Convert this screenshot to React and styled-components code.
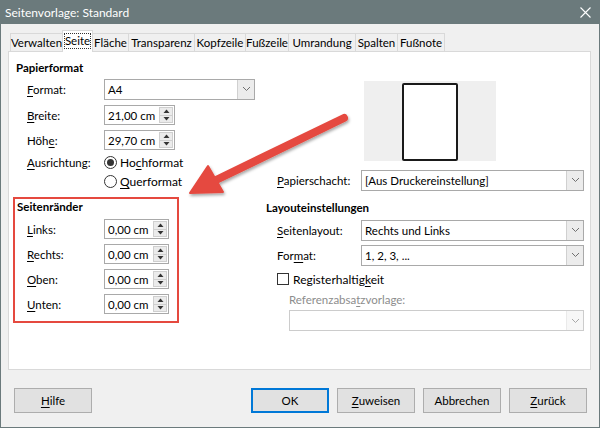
import React from "react";
import styled, { createGlobalStyle } from "styled-components";

const GlobalStyle = createGlobalStyle`
  html, body { margin: 0; padding: 0; background: #ffffff; }
  body {
    font-family: Lato, "Noto Sans", "Liberation Sans", sans-serif;
    font-size: 11.5px;
    color: #000;
  }
`;

const TABS = [
  { label: "Verwalten", w: 53 },
  { label: "Seite", w: 31, active: true },
  { label: "Fläche", w: 37 },
  { label: "Transparenz", w: 67 },
  { label: "Kopfzeile", w: 52 },
  { label: "Fußzeile", w: 44 },
  { label: "Umrandung", w: 68 },
  { label: "Spalten", w: 43 },
  { label: "Fußnote", w: 48 },
];

const MARGINS = [
  { key: "L", post: "inks:" },
  { key: "R", post: "echts:" },
  { key: "O", post: "ben:" },
  { key: "U", post: "nten:" },
];

const Chevron = () => (
  <svg width="9" height="6" viewBox="0 0 9 6">
    <path d="M1 1 L4.5 4.5 L8 1" fill="none" stroke="#707070" strokeWidth="1" />
  </svg>
);

const Dropdown = ({ value, width, disabled }) => (
  <Select $width={width} $disabled={disabled}>
    <SelectValue>{value}</SelectValue>
    <SelectButton $disabled={disabled}>
      <Chevron />
    </SelectButton>
  </Select>
);

const SpinField = ({ value, width }) => (
  <Spin $width={width}>
    <SpinValue>{value}</SpinValue>
    <SpinButtons>
      <SpinHalf>
        <svg width="7" height="4" viewBox="0 0 7 4">
          <path d="M0.5 4 L3.5 0.5 L6.5 4 Z" fill="#333" />
        </svg>
      </SpinHalf>
      <SpinHalf $bottom>
        <svg width="7" height="4" viewBox="0 0 7 4">
          <path d="M0.5 0 L3.5 3.5 L6.5 0 Z" fill="#333" />
        </svg>
      </SpinHalf>
    </SpinButtons>
  </Spin>
);

const App = () => {
  return (
    <>
      <GlobalStyle />
      <Window>
        <TitleBar>
          <TitleText>Seitenvorlage: Standard</TitleText>
          <CloseIcon viewBox="0 0 11 11" width="11" height="11">
            <path d="M0.5 0.5 L10.5 10.5 M10.5 0.5 L0.5 10.5" stroke="#fff" strokeWidth="1.1" />
          </CloseIcon>
        </TitleBar>

        <Body>
          <TabBar>
            {TABS.map((t) => (
              <Tab key={t.label} $w={t.w} $active={t.active}>
                {t.active ? <Focus>{t.label}</Focus> : t.label}
              </Tab>
            ))}
          </TabBar>

          <Panel>
            <LeftColumn>
              <Heading>Papierformat</Heading>
              <Row $mt={3}>
                <Label><U>F</U>ormat:</Label>
                <Dropdown value="A4" width={151} />
              </Row>
              <Row $mt={6}>
                <Label><U>B</U>reite:</Label>
                <SpinField value="21,00 cm" width={71} />
              </Row>
              <Row $mt={5}>
                <Label>Höh<U>e</U>:</Label>
                <SpinField value="29,70 cm" width={71} />
              </Row>
              <Row $mt={3} $h={18}>
                <Label><U>A</U>usrichtung:</Label>
                <Radio $checked />
                <RadioText>Ho<U>c</U>hformat</RadioText>
              </Row>
              <Row $mt={1} $h={18}>
                <Label />
                <Radio />
                <RadioText><U>Q</U>uerformat</RadioText>
              </Row>

              <Highlight>
                <Heading>Seitenränder</Heading>
                {MARGINS.map((m, i) => (
                  <Row key={m.key} $mt={i === 0 ? 4 : 5} $indent={10}>
                    <Label $w={77}>
                      <U>{m.key}</U>
                      {m.post}
                    </Label>
                    <SpinField value="0,00 cm" width={65} />
                  </Row>
                ))}
              </Highlight>
            </LeftColumn>

            <RightColumn>
              <Preview>
                <PreviewPage />
              </Preview>
              <Row $mt={9}>
                <Label $w={84}><U>P</U>apierschacht:</Label>
                <Dropdown value="[Aus Druckereinstellung]" width={223} />
              </Row>
              <Heading $mt={10}>Layouteinstellungen</Heading>
              <Row $mt={4}>
                <Label $w={84}><U>S</U>eitenlayout:</Label>
                <Dropdown value="Rechts und Links" width={223} />
              </Row>
              <Row $mt={5}>
                <Label $w={84}>For<U>m</U>at:</Label>
                <Dropdown value="1, 2, 3, ..." width={223} />
              </Row>
              <Row $mt={6} $h={16}>
                <Checkbox />
                <CheckText>Registerhaltig<U>k</U>eit</CheckText>
              </Row>
              <SubLabel>Referenzabsa<U>t</U>zvorlage:</SubLabel>
              <SubField>
                <Dropdown value="" width={295} disabled />
              </SubField>
            </RightColumn>
          </Panel>

          <Footer>
            <Button><U>H</U>ilfe</Button>
            <ButtonGroup>
              <Button $primary>OK</Button>
              <Button><U>Z</U>uweisen</Button>
              <Button>Abbrechen</Button>
              <Button><U>Z</U>urück</Button>
            </ButtonGroup>
          </Footer>
        </Body>

        <Annotation width="600" height="428" viewBox="0 0 600 428">
          <defs>
            <filter id="shadow" x="-20%" y="-20%" width="140%" height="160%">
              <feDropShadow dx="1" dy="2" stdDeviation="1.6" floodColor="#000" floodOpacity="0.35" />
            </filter>
          </defs>
          <g filter="url(#shadow)">
            <path d="M344 118 L214 181" stroke="#e5493f" strokeWidth="8" strokeLinecap="round" />
            <path d="M190 193 L208 166 L223 192 Z" fill="#e5493f" stroke="#e5493f" strokeWidth="2" strokeLinejoin="round" />
          </g>
        </Annotation>
      </Window>
    </>
  );
};

export default App;

const Window = styled.div`
  position: relative;
  width: 600px;
  height: 428px;
  box-sizing: border-box;
  background: #f0f0f0;
  border: 1px solid #6b7a7c;
  border-top: none;
  display: flex;
  flex-direction: column;
`;

const TitleBar = styled.div`
  height: 24px;
  margin: 0 -1px;
  background: #6b7a7c;
  display: flex;
  align-items: center;
  justify-content: space-between;
  padding: 0 9px 0 5px;
`;

const TitleText = styled.span`
  color: #ffffff;
  font-size: 12px;
`;

const CloseIcon = styled.svg`
  display: block;
`;

const Body = styled.div`
  flex: 1;
  display: flex;
  flex-direction: column;
  padding: 7px 8px 0 7px;
`;

const TabBar = styled.div`
  display: flex;
  align-items: flex-end;
  height: 21px;
  padding-left: 2px;
  position: relative;
  z-index: 1;
  margin-bottom: -1px;
`;

const Tab = styled.div`
  box-sizing: border-box;
  width: ${(p) => p.$w}px;
  height: ${(p) => (p.$active ? 22 : 19)}px;
  margin-right: -1px;
  border: 1px solid #d9d9d9;
  border-bottom: ${(p) => (p.$active ? "none" : "1px solid #d9d9d9")};
  background: ${(p) => (p.$active ? "#ffffff" : "#f0f0f0")};
  display: flex;
  align-items: center;
  justify-content: center;
  padding-bottom: ${(p) => (p.$active ? 2 : 0)}px;
  white-space: nowrap;
  position: relative;
  z-index: ${(p) => (p.$active ? 2 : 1)};
`;

const Focus = styled.span`
  outline: 1px dotted #333;
  line-height: 14px;
`;

const Panel = styled.div`
  box-sizing: border-box;
  height: 319px;
  background: #ffffff;
  border: 1px solid #d9d9d9;
  display: grid;
  grid-template-columns: 250px 1fr;
  padding: 8px 5px 0 7px;
`;

const LeftColumn = styled.div`
  display: flex;
  flex-direction: column;
`;

const RightColumn = styled.div`
  display: flex;
  flex-direction: column;
`;

const Heading = styled.div`
  font-weight: bold;
  font-size: 11.5px;
  line-height: 16px;
  height: 16px;
  margin-top: ${(p) => p.$mt || 0}px;
`;

const Row = styled.div`
  display: flex;
  align-items: center;
  height: ${(p) => p.$h || 20}px;
  margin-top: ${(p) => p.$mt || 0}px;
  padding-left: ${(p) => (p.$indent !== undefined ? p.$indent : 11)}px;
`;

const Label = styled.div`
  width: ${(p) => p.$w || 77}px;
  flex-shrink: 0;
  white-space: nowrap;
`;

const U = styled.span`
  text-decoration: underline;
  text-underline-offset: 2px;
`;

const Select = styled.div`
  box-sizing: border-box;
  width: ${(p) => p.$width}px;
  height: 21px;
  border: 1px solid ${(p) => (p.$disabled ? "#cccccc" : "#a9a9a9")};
  background: #ffffff;
  display: flex;
  align-items: stretch;
`;

const SelectValue = styled.div`
  flex: 1;
  display: flex;
  align-items: center;
  padding-left: 3px;
  white-space: nowrap;
`;

const SelectButton = styled.div`
  width: 16px;
  border-left: 1px solid ${(p) => (p.$disabled ? "#dddddd" : "#d0d0d0")};
  background: ${(p) => (p.$disabled ? "#f2f2f2" : "#ececec")};
  display: flex;
  align-items: center;
  justify-content: center;
  opacity: ${(p) => (p.$disabled ? 0.6 : 1)};
`;

const Spin = styled.div`
  box-sizing: border-box;
  width: ${(p) => p.$width}px;
  height: 20px;
  border: 1px solid #a9a9a9;
  background: #ffffff;
  display: flex;
  align-items: stretch;
`;

const SpinValue = styled.div`
  flex: 1;
  display: flex;
  align-items: center;
  padding-left: 3px;
  white-space: nowrap;
`;

const SpinButtons = styled.div`
  width: 14px;
  margin: 1px;
  display: flex;
  flex-direction: column;
  background: #ebebeb;
  border: 1px solid #cfcfcf;
  box-sizing: border-box;
`;

const SpinHalf = styled.div`
  flex: 1;
  display: flex;
  align-items: center;
  justify-content: center;
  border-top: ${(p) => (p.$bottom ? "1px solid #cfcfcf" : "none")};
`;

const Radio = styled.span`
  box-sizing: border-box;
  width: 13px;
  height: 13px;
  border-radius: 50%;
  border: 1px solid #333;
  background: #fff;
  display: flex;
  align-items: center;
  justify-content: center;
  &::after {
    content: "";
    width: 7px;
    height: 7px;
    border-radius: 50%;
    background: ${(p) => (p.$checked ? "#333" : "transparent")};
  }
`;

const RadioText = styled.span`
  margin-left: 3px;
  font-size: 12px;
`;

const Highlight = styled.div`
  box-sizing: border-box;
  width: 166px;
  height: 126px;
  margin: 7px 0 0 -3px;
  border: 2px solid #e5493f;
  padding: 0 0 0 2px;
  display: flex;
  flex-direction: column;
`;

const Preview = styled.div`
  width: 132px;
  height: 80px;
  margin: 21px 0 0 98px;
  background: #efefef;
  display: flex;
  justify-content: center;
  align-items: flex-end;
`;

const PreviewPage = styled.div`
  box-sizing: border-box;
  width: 56px;
  height: 78px;
  border: 2px solid #1a1a1a;
  border-radius: 2px;
  background: #fff;
`;

const Checkbox = styled.span`
  box-sizing: border-box;
  width: 12px;
  height: 12px;
  border: 1px solid #333;
  background: #fff;
`;

const CheckText = styled.span`
  margin-left: 4px;
  font-size: 12px;
`;

const SubLabel = styled.div`
  color: #8d8d8d;
  line-height: 16px;
  margin: 5px 0 0 23px;
`;

const SubField = styled.div`
  margin: 2px 0 0 23px;
`;

const Footer = styled.div`
  display: flex;
  justify-content: space-between;
  align-items: center;
  padding: 18px 4px 0 6px;
`;

const ButtonGroup = styled.div`
  display: flex;
  gap: 8px;
`;

const Button = styled.div`
  box-sizing: border-box;
  width: 78px;
  height: 25px;
  background: #e1e1e1;
  border: ${(p) => (p.$primary ? "2px solid #0078d7" : "1px solid #adadad")};
  display: flex;
  align-items: center;
  justify-content: center;
`;

const Annotation = styled.svg`
  position: absolute;
  left: -1px;
  top: 0;
  pointer-events: none;
`;
